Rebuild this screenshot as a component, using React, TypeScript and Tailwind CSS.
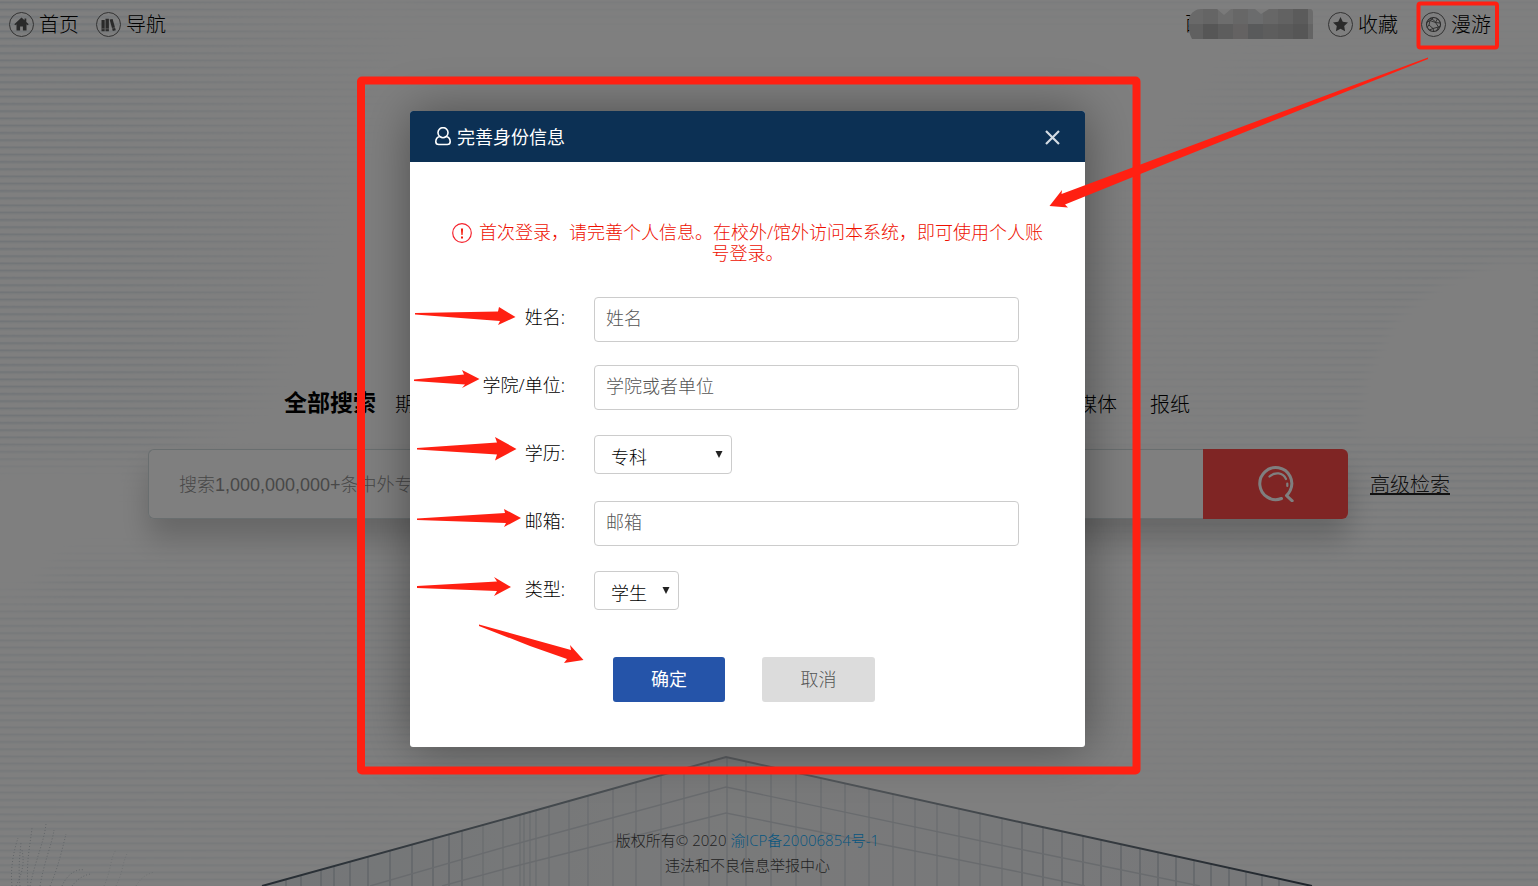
import type { ReactNode } from "react";

const FONT =
  "font-['Open_Sans','Noto_Sans_CJK_SC',sans-serif] antialiased";

// x positions of the mullions on the glass building
const MULLIONS = [
  286, 301, 321, 334, 350, 368, 390, 412, 433, 449, 462, 483, 503, 520, 524,
  530, 536, 549, 569, 588, 613, 636, 661, 684, 709, 727, 746, 771, 796, 821,
  845, 869, 893, 915, 937, 959, 980, 1002, 1022, 1043, 1062, 1083, 1101, 1121,
  1140, 1158, 1176, 1194, 1211, 1229, 1246, 1262, 1279,
];

const ARROWS = [
  "415,313 498,311.5 499,307 515.5,317 498,325 500,321 415,314.5",
  "414,379.5 464,374.5 462,370 479.5,379 462,388 465,384.5 414,381",
  "417,448 497,442.5 495,437 516.5,449 495,460.5 497,454.5 417,449.5",
  "417,518.5 505,513 504,509 521,518 504,527 506,523 417,520",
  "417,586 497,581.5 494,577 511,587 494,596 497,591 417,588",
  "479,624.5 571,650 570,645 583.5,660 564,663 567,659 530,646 479,626",
  "1428,57.5 1061.5,194 1062,190 1049.5,206 1068,207.5 1065,204.5 1170,162 1428,59",
];

// shade of every mosaic tile, row by row
const MOSAIC = [
  ["#d2d2d2", "#cacaca", "#dadada", "#cecece", "#d6d8da", "#cecece", "#c4c4c4", "#b6b6b6", "#d6d6d6"],
  ["#c0c0c0", "#acacac", "#bababa", "#c8c4c4", "#b2b4b6", "#bababa", "#b4b4b4", "#acacac", "#c8c8c8"],
];

function Backdrop() {
  return (
    <svg
      className="pointer-events-none absolute inset-0 h-full w-full"
      viewBox="0 0 1538 886"
      preserveAspectRatio="xMidYMax slice"
      aria-hidden="true"
    >
      <defs>
        <pattern id="slats" y="1" width="40" height="7.25" patternUnits="userSpaceOnUse">
          <rect width="40" height="1" y="0.3" fill="#e7eef3" />
          <rect width="40" height="1.2" y="1" fill="#dce5eb" />
          <rect width="40" height="1" y="2.2" fill="#eef3f6" />
        </pattern>
        <linearGradient id="fadeRight">
          <stop offset="0" stopColor="#fff" />
          <stop offset="0.4" stopColor="#fff" stopOpacity="0.7" />
          <stop offset="1" stopColor="#fff" stopOpacity="0" />
        </linearGradient>
        <linearGradient id="fadeLeft" x1="1" x2="0">
          <stop offset="0" stopColor="#fff" />
          <stop offset="0.4" stopColor="#fff" stopOpacity="0.6" />
          <stop offset="1" stopColor="#fff" stopOpacity="0" />
        </linearGradient>
        <filter id="soft" x="-20%" y="-20%" width="140%" height="140%">
          <feGaussianBlur stdDeviation="6" />
        </filter>
        <filter id="haze" x="-20%" y="-20%" width="140%" height="140%">
          <feGaussianBlur stdDeviation="18" />
        </filter>
        <mask id="slatMask">
          <g filter="url(#haze)">
            <path d="M-60-60H440L350 180 260 400 150 460H-60Z" fill="url(#fadeRight)" />
            <path d="M400-60H1600V18H400Z" fill="#fff" opacity="0.35" />
            <path d="M60 560 30 600H-60V940H800L700 640 420 560Z" fill="url(#fadeRight)" opacity="0.6" />
            <path d="M1240 60H1600V940H1000L1100 560 1000 330Z" fill="url(#fadeLeft)" opacity="0.7" />
          </g>
          <g fill="#000" filter="url(#soft)">
            <path d="M1538 262H1500L1440 285 1395 320 1365 380 1358 440H1538Z" />
            <path d="M0 475H130L60 545 30 580H0Z" />
          </g>
        </mask>
        <clipPath id="facade">
          <path d="M262 886 512 817 726 757 1024 823 1312 886Z" />
        </clipPath>
        <linearGradient id="roof">
          <stop offset="0" stopColor="#4a5764" />
          <stop offset="0.3" stopColor="#8c979f" />
          <stop offset="0.44" stopColor="#b6bcc2" />
          <stop offset="0.6" stopColor="#98a1a9" />
          <stop offset="1" stopColor="#3f4b58" />
        </linearGradient>
        <linearGradient id="glass">
          <stop offset="0" stopColor="#e8ecef" />
          <stop offset="0.45" stopColor="#f3f4f5" />
          <stop offset="1" stopColor="#eef0f3" />
        </linearGradient>
      </defs>

      <rect width="1538" height="886" fill="url(#slats)" mask="url(#slatMask)" />

      <g clipPath="url(#facade)" fill="none">
        <rect x="262" y="750" width="1050" height="136" fill="url(#glass)" />
        {MULLIONS.map((x) => (
          <path
            key={x}
            d={`M${x} 750V886`}
            stroke={x < 480 || x > 1020 ? "#c2c9d0" : "#d6dbe0"}
            strokeWidth="1.4"
          />
        ))}
        <path d="M370 886 512 845 726 787 1024 850 1200 886" stroke="#d2d7dc" strokeWidth="1.4" />
        <path d="M442 886 512 867 726 813 1024 873 1085 886" stroke="#d2d7dc" strokeWidth="1.4" />
      </g>
      <path
        d="M262 886 512 817 726 757 1024 823 1312 886"
        fill="none"
        stroke="url(#roof)"
        strokeWidth="2"
      />

      <g fill="none" stroke="#c2cad0" strokeDasharray="1 2">
        <path d="M12 886C10 868 14 850 18 838M20 886C18 866 20 856 21 842M28 886C26 862 30 846 32 828" />
        <path d="M30 886C36 858 44 842 46 824M40 886C44 862 52 844 54 830M50 886C58 868 62 850 66 834" />
        <path d="M16 886C24 870 24 860 22 850M62 886C66 876 76 868 84 870M72 886C78 878 86 874 92 874" />
        <path d="M104 886C112 868 110 858 116 850M116 886C124 870 122 862 128 852M136 886C142 876 148 874 154 872" opacity="0.5" />
      </g>
    </svg>
  );
}

function CircleIcon({ children }: { children: ReactNode }) {
  return (
    <svg width="25" height="25" viewBox="0 0 25 25" fill="none" aria-hidden="true">
      <circle cx="12.5" cy="12.5" r="12" stroke="#666" />
      {children}
    </svg>
  );
}

function NavLink({ label, children }: { label: string; children: ReactNode }) {
  return (
    <a href="#" className="flex items-center gap-[5px]">
      <CircleIcon>{children}</CircleIcon>
      <span className="pt-[2px]">{label}</span>
    </a>
  );
}

function Header() {
  return (
    <header className="flex h-12 items-center justify-between pr-[47px] pl-[9px] text-[20px] leading-[30px] font-light text-black">
      <nav className="flex items-center gap-[17px]">
        <NavLink label="首页">
          <path
            fill="#555"
            d="M12.5 5.5 5.3 12.2l1 1 1.2-1v6.3h3.6v-4h2.8v4h3.6v-6.3l1.2 1 1-1-2.4-2.2V6.5h-1.8v1.8Z"
          />
        </NavLink>
        <NavLink label="导航">
          <path
            fill="#555"
            d="M5.5 8h3.2v11.3H5.5ZM9.5 6.8h3.4v12.5H9.5ZM13.6 7.6l3-.7 3.2 11.3-3 .9Z"
          />
          <path stroke="#ddd" strokeWidth="0.6" d="M5.5 16.8h3.2M9.5 16.8h3.4M16 16.4l3-.8" />
        </NavLink>
      </nav>

      <div className="flex items-center">
        <div className="mr-[15px] flex items-center">
          <span>西</span>
          <svg className="relative -ml-4" width="124" height="30" viewBox="0 0 124 30" aria-hidden="true">
            <clipPath id="mosaicShape">
              <path d="M0 8C3 3 7 0 12 0H121Q124 0 124 4V30H3Q0 24 0 20Z" />
            </clipPath>
            <g clipPath="url(#mosaicShape)">
              {MOSAIC.map((row, y) =>
                row.map((fill, x) => (
                  <rect key={`${x}-${y}`} x={x * 15 - 1} y={y * 15} width="15" height="15" fill={fill} />
                )),
              )}
              <path d="M28 0H42L35 6ZM66 0H80L72 5Z" fill="#f4f4f4" />
            </g>
          </svg>
        </div>
        <nav className="flex items-center gap-[23px]">
          <NavLink label="收藏">
            <path
              fill="#555"
              d="m12.5 5 2.3 4.8 5.2.7-3.8 3.6.9 5.2-4.6-2.5-4.6 2.5.9-5.2L5 10.5l5.2-.7Z"
            />
          </NavLink>
          <NavLink label="漫游">
            <g stroke="#555">
              <circle cx="12.5" cy="12.5" r="7" strokeWidth="1.1" />
              <path
                strokeWidth="0.9"
                d="M9 6.5C12 7 14 9 14.5 10.5L19 11M16.5 6.8 14.5 10.5 17.5 15 15.5 18.8M19.3 14 17.5 15 12 16.5 8.5 18M12 16.5 12.8 19.3M12 16.5 8 13 6 15.5M8 13 9 8.5 5.8 10.5M9 8.5 14.5 10.5M9 8.5 12.5 5.7"
              />
            </g>
          </NavLink>
        </nav>
      </div>
    </header>
  );
}

function SearchArea() {
  return (
    <main className="pt-[336px]">
      <div className="mr-[348px] ml-[284px] flex h-10 items-center justify-between text-[20px] text-black">
        <div className="flex items-center gap-[19px]">
          <a href="#" className="pb-[3px] text-[23px] font-bold">
            全部搜索
          </a>
          <a href="#" className="pt-[2px] font-light">
            期刊
          </a>
        </div>
        <div className="flex items-center gap-[33px] pt-[2px] font-light">
          <a href="#">媒体</a>
          <a href="#">报纸</a>
        </div>
      </div>

      <div className="mt-[25px] mr-[88px] ml-[148px] flex items-center gap-[22px]">
        <form className="flex h-[70px] flex-1 rounded-md shadow-[0_20px_30px_rgba(0,0,0,0.2)]">
          <input
            type="text"
            aria-label="搜索"
            placeholder="搜索1,000,000,000+条中外专业文献"
            className="min-w-0 flex-1 rounded-l-md border border-r-0 border-[#d2dcde] bg-white px-[30px] pt-[2px] font-['Liberation_Sans','Noto_Sans_CJK_SC',sans-serif] text-[18px] font-light placeholder:text-[#909090]"
          />
          <button
            type="button"
            aria-label="检索"
            className="flex w-[145px] items-center justify-center rounded-r-md bg-[#ff4b49]"
          >
            <svg width="36" height="36" viewBox="0 0 36 36" fill="none" stroke="#fff" strokeLinecap="round" strokeLinejoin="round" aria-hidden="true">
              <path strokeWidth="3" d="M23.5 32.5A16 16 0 1 1 32.2 24.5C31.3 26.5 30 28.2 28.5 29.6L34.2 34.8" />
              <path strokeWidth="2.2" d="M11.5 10.5C17 5.5 25 6.5 28 13M29.3 17.5V20" />
            </svg>
          </button>
        </form>
        <a href="#" className="pt-[2px] text-[20px] font-light text-[#222] underline">
          高级检索
        </a>
      </div>
    </main>
  );
}

function Field({ id, label, children }: { id: string; label: string; children: ReactNode }) {
  return (
    <div className="flex h-[45px] items-center gap-[29px]">
      <label htmlFor={id} className="w-[155px] pb-[6px] text-right">
        {label}:
      </label>
      {children}
    </div>
  );
}

function TextInput({ id, placeholder }: { id: string; placeholder: string }) {
  return (
    <input
      id={id}
      type="text"
      placeholder={placeholder}
      className="mr-[66px] h-[45px] min-w-0 flex-1 rounded border border-[#ccc] px-[11px] pb-[3px] placeholder:text-[#555]"
    />
  );
}

function Select({ id, options, width }: { id: string; options: string[]; width: string }) {
  return (
    <div className={`relative pb-[2px] ${width}`}>
      <select
        id={id}
        className="block h-[39px] w-full appearance-none rounded border border-[#ccc] bg-white pt-1 pl-4"
      >
        {options.map((option) => (
          <option key={option}>{option}</option>
        ))}
      </select>
      <svg
        className="pointer-events-none absolute top-4 right-[9px]"
        width="8"
        height="7"
        viewBox="0 0 8 7"
        aria-hidden="true"
      >
        <path d="M0.5 0H7.5L4 7Z" fill="#222" />
      </svg>
    </div>
  );
}

function IdentityDialog() {
  return (
    <div className="absolute inset-0 flex items-start justify-center bg-black/50 pt-[111px] pr-[43px]">
      <div
        role="dialog"
        aria-labelledby="dialog-title"
        className="w-[675px] overflow-hidden rounded-[3px] bg-white text-[18px] leading-5 font-light text-black shadow-[1px_1px_50px_rgba(0,0,0,0.4)]"
      >
        <div className="flex h-[51px] items-center justify-between bg-[#0c3054] px-[25px] text-white">
          <h2 id="dialog-title" className="flex items-center gap-[6px] font-normal">
            <svg width="16" height="20" viewBox="0 0 16 20" fill="none" stroke="#fff" strokeWidth="1.6" aria-hidden="true">
              <path d="M4.8 9.5A5 5 0 1 1 11.2 9.5M4.8 9.5C2.5 10 .8 12 .8 14.8 .8 16.8 1.9 17.5 3.8 17.5H12.2C14.1 17.5 15.2 16.8 15.2 14.8 15.2 12 13.5 10 11.2 9.5M4.8 9.5C6.6 10.9 9.4 10.9 11.2 9.5" />
            </svg>
            完善身份信息
          </h2>
          <button type="button" aria-label="关闭" className="pt-[2px]">
            <svg className="block" width="15" height="15" viewBox="0 0 15 15" stroke="#d3dbe3" strokeWidth="2.2" aria-hidden="true">
              <path d="M1 1 14 14M14 1 1 14" />
            </svg>
          </button>
        </div>

        <form className="pt-[60px] pb-[45px]">
          <p className="px-[37px] text-center text-[#ee0f00]">
            <svg className="-mt-2 mr-[7px] inline-block align-[-4px]" width="20" height="20" viewBox="0 0 20 20" fill="none" aria-hidden="true">
              <circle cx="10" cy="10" r="9.3" stroke="#f5222d" strokeWidth="1.2" />
              <path d="M8.9 5.5H11.1L10.6 12H9.4ZM9 13.5H11V15.5H9Z" fill="#f31b0c" />
            </svg>
            首次登录，请完善个人信息。在校外/馆外访问本系统，即可使用个人账号登录。
          </p>

          <div className="mt-[34px] flex flex-col gap-[23px]">
            <Field id="name" label="姓名">
              <TextInput id="name" placeholder="姓名" />
            </Field>
            <Field id="college" label="学院/单位">
              <TextInput id="college" placeholder="学院或者单位" />
            </Field>
            <Field id="degree" label="学历">
              <Select id="degree" options={["专科"]} width="w-[138px]" />
            </Field>
            <Field id="email" label="邮箱">
              <TextInput id="email" placeholder="邮箱" />
            </Field>
            <Field id="type" label="类型">
              <Select id="type" options={["学生"]} width="w-[85px]" />
            </Field>
          </div>

          <div className="mt-[43px] flex gap-[37px] pl-[203px]">
            <button type="button" className="h-[45px] w-[112px] rounded-[3px] bg-[#2554a9] pb-[2px] font-normal text-white">
              确定
            </button>
            <button type="button" className="h-[45px] w-[113px] rounded-[3px] bg-[#dcdcdc] pb-[2px] text-[#555]">
              取消
            </button>
          </div>
        </form>
      </div>
    </div>
  );
}

function Annotations() {
  return (
    <svg
      className="pointer-events-none absolute top-0 left-0"
      width="1538"
      height="886"
      viewBox="0 0 1538 886"
      aria-hidden="true"
    >
      <g fill="none" stroke="#ff2012" strokeLinejoin="round">
        <rect x="361" y="80.5" width="775.5" height="690" strokeWidth="8" rx="1" />
        <rect x="1418.5" y="3.5" width="78.5" height="44" strokeWidth="4" rx="2" />
      </g>
      <g fill="#ff2012">
        {ARROWS.map((points) => (
          <polygon key={points} points={points} />
        ))}
      </g>
    </svg>
  );
}

export default function App() {
  return (
    <div lang="zh-CN" className={`relative min-h-screen overflow-hidden bg-white ${FONT}`}>
      <Backdrop />
      <div className="relative flex min-h-screen flex-col">
        <Header />
        <SearchArea />
        <footer className="mt-auto pr-[43px] pb-2 text-center text-[15px] leading-[25px] font-light text-[#444]">
          <p>
            版权所有© 2020{" "}
            <a href="#" className="text-[#0cacff]">
              渝ICP备20006854号-1
            </a>
          </p>
          <p>违法和不良信息举报中心</p>
        </footer>
      </div>
      <IdentityDialog />
      <Annotations />
    </div>
  );
}
